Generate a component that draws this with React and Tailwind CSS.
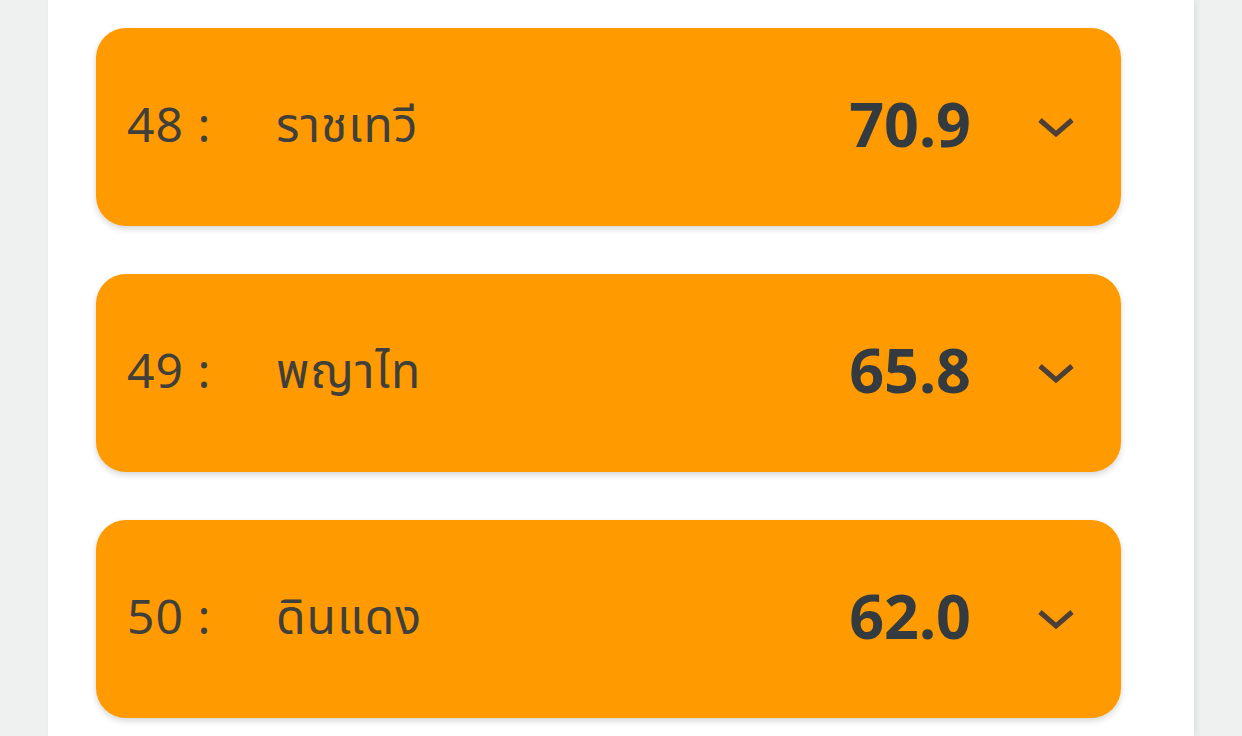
import React from 'react';

const ROWS = [
  { rank: 48, name: 'ราชเทวี', score: '70.9' },
  { rank: 49, name: 'พญาไท', score: '65.8' },
  { rank: 50, name: 'ดินแดง', score: '62.0' },
];

function Chevron() {
  return (
    <svg width="38" height="22" viewBox="0 0 38 22" fill="none" className="shrink-0">
      <path d="M3 4 L19 18 L35 4" stroke="#4a4038" strokeWidth="5" strokeLinecap="butt" strokeLinejoin="miter" />
    </svg>
  );
}

function RankCard({ row }) {
  return (
    <div className="flex h-[198px] items-center rounded-[30px] bg-[#ff9a00] pl-[31px] pr-[46px] shadow-[0_3px_6px_rgba(0,0,0,0.16)]">
      <div className="mb-[6px] w-[149px] shrink-0 text-[48px] tracking-[1px] text-[#3f3f3c]">{row.rank} :</div>
      <div className="mb-[6px] flex-1 text-[48px] tracking-[1px] text-[#3f3f3c]">{row.name}</div>
      <div className="mb-[6px] text-[61px] font-bold text-[#333b40]">{row.score}</div>
      <div className="ml-[66px] flex items-center">
        <Chevron />
      </div>
    </div>
  );
}

export default function App() {
  return (
    <div
      className="h-[736px] overflow-hidden bg-[#eff1f0] px-12"
      style={{ fontFamily: '"Noto Sans", "Noto Sans Thai", sans-serif' }}
    >
      <div className="h-full w-[1146px] bg-white pl-12 pr-[73px] pt-[28px] shadow-[2px_0_6px_rgba(0,0,0,0.08)]">
        <div className="flex flex-col gap-12">
          {ROWS.map(row => (
            <RankCard key={row.rank} row={row} />
          ))}
        </div>
      </div>
    </div>
  );
}
